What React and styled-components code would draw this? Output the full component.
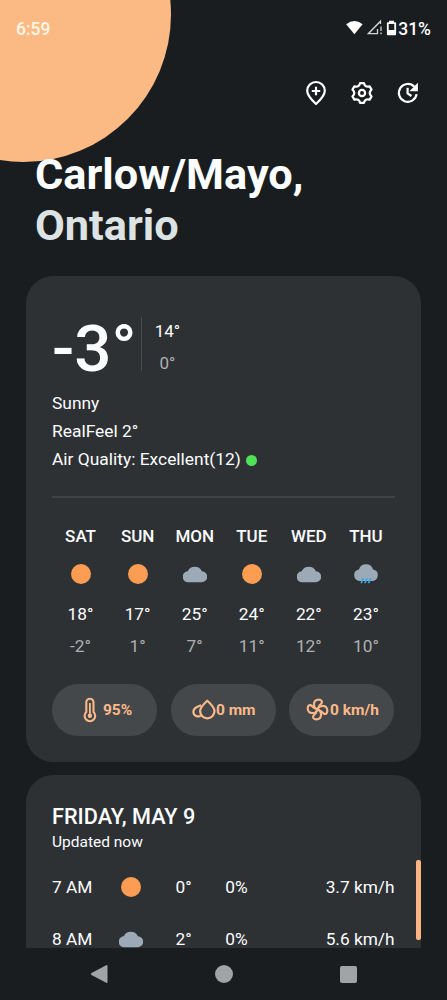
import styled, { createGlobalStyle } from "styled-components";

const GlobalStyle = createGlobalStyle`
  * {
    box-sizing: border-box;
  }
  body {
    margin: 0;
    background: #191d1f;
    font-family: Roboto, sans-serif;
    color: #fcfdff;
  }
  svg {
    display: block;
    flex-shrink: 0;
  }
`;

const Screen = styled.div`
  position: relative;
  display: flex;
  flex-direction: column;
  height: 1000px;
  overflow: hidden;
`;

const SunDisc = styled.div`
  position: absolute;
  top: -133px;
  left: -124.5px;
  width: 295px;
  height: 295px;
  border-radius: 50%;
  background: #fbba84;
`;

const StatusBar = styled.div`
  position: relative;
  display: flex;
  align-items: center;
  justify-content: space-between;
  height: 57px;
  padding: 0 16px;
  font-size: 17.5px;
  font-weight: 500;
`;

const Clock = styled.span`
  color: #fff6e6;
`;

const StatusIcons = styled.div`
  display: flex;
  align-items: center;
`;

const Toolbar = styled.div`
  display: flex;
  align-items: center;
  justify-content: flex-end;
  gap: 18px;
  height: 72px;
  padding-right: 25px;
`;

const Title = styled.h1`
  position: relative;
  margin: 20px 0 24.5px;
  padding-left: 35px;
  font-size: 43.3px;
  line-height: 51px;
  font-weight: 700;
  span {
    display: block;
    color: #dde2e3;
  }
`;

const Content = styled.div`
  flex: 1;
  min-height: 0;
  overflow: hidden;
`;

const Card = styled.section`
  margin: 0 26.5px 13px 26px;
  padding: ${(props) => props.$top}px 26px 26px;
  border-radius: 27px;
  background: #2e3134;
`;

const Current = styled.div`
  display: flex;
  height: 74px;
`;

const Temperature = styled.div`
  width: 89px;
  font-size: 65.5px;
  line-height: 67px;
  font-weight: 500;
  white-space: nowrap;
`;

const Separator = styled.div`
  width: 1px;
  height: 54px;
  margin-top: 2px;
  background: #494c4e;
`;

const Range = styled.div`
  width: 51px;
  font-size: 17px;
  line-height: 32px;
  text-align: center;
`;

const Low = styled.div`
  color: #adb0b2;
`;

const Details = styled.div`
  font-size: 17.4px;
  line-height: 28px;
  padding-bottom: 23px;
  border-bottom: 2px solid #404346;
`;

const QualityDot = styled.span`
  display: inline-block;
  width: 11px;
  height: 11px;
  margin-left: 5px;
  border-radius: 50%;
  background: #50e158;
  vertical-align: -1px;
`;

const Week = styled.div`
  display: grid;
  grid-template-columns: repeat(6, 1fr);
  margin-top: 28px;
`;

const Day = styled.div`
  display: flex;
  flex-direction: column;
  align-items: center;
  font-size: 17.3px;
  line-height: 32px;
`;

const DayName = styled.div`
  font-size: 17px;
  font-weight: 500;
  line-height: 20px;
`;

const DayIcon = styled.div`
  display: flex;
  align-items: center;
  height: 24px;
  margin: 16.5px 0 11.5px;
`;

const Chips = styled.div`
  display: grid;
  grid-template-columns: repeat(3, 1fr);
  gap: 13.5px;
  margin-top: 22px;
`;

const Chip = styled.div`
  display: flex;
  align-items: center;
  justify-content: center;
  height: 52px;
  border-radius: 26px;
  background: #45484a;
  color: #fbb98a;
  font-size: 15.5px;
  font-weight: 700;
  white-space: nowrap;
`;

const Heading = styled.h2`
  margin: 0;
  font-size: 21.7px;
  line-height: 26px;
  font-weight: 500;
`;

const Updated = styled.div`
  font-size: 15.5px;
  line-height: 24px;
  margin-bottom: 7px;
`;

const HourRow = styled.div`
  display: grid;
  grid-template-columns: 52px 53px 53px 53px 1fr;
  align-items: center;
  justify-items: center;
  height: 52px;
  font-size: 17.3px;
  white-space: nowrap;
`;

const Time = styled.span`
  justify-self: start;
`;

const Wind = styled.span`
  justify-self: end;
`;

const ScrollThumb = styled.div`
  position: absolute;
  left: 416px;
  top: 860px;
  width: 5px;
  height: 80px;
  border-radius: 2px;
  background: #fbb585;
`;

const NavBar = styled.nav`
  display: flex;
  align-items: center;
  justify-content: space-between;
  height: 52px;
  padding: 0 90px;
  background: #191d1f;
`;

const week = [
  { name: "SAT", icon: "sun", high: 18, low: -2 },
  { name: "SUN", icon: "sun", high: 17, low: 1 },
  { name: "MON", icon: "cloud", high: 25, low: 7 },
  { name: "TUE", icon: "sun", high: 24, low: 11 },
  { name: "WED", icon: "cloud", high: 22, low: 12 },
  { name: "THU", icon: "rain", high: 23, low: 10 },
];

const hours = [
  { time: "7 AM", icon: "sun", temp: 0, rain: 0, wind: 3.7 },
  { time: "8 AM", icon: "cloud", temp: 2, rain: 0, wind: 5.6 },
];

function WeatherIcon({ type }) {
  if (type === "sun") {
    return (
      <svg width="24" height="24" viewBox="0 0 24 24">
        <circle cx="12" cy="12" r="10" fill="#fd9d53" />
      </svg>
    );
  }
  return (
    <svg width="24" height="24" viewBox="0 0 24 24">
      <path
        d={
          type === "rain"
            ? "M5.6 18.9A5.7 5.7 0 0 1 4.9 7.6A7.4 7.4 0 0 1 19.1 7.6A5.7 5.7 0 0 1 18.4 18.9z"
            : "M5.6 20.3A5.5 5.5 0 0 1 4.7 9.3A7.9 7.9 0 0 1 18.9 9.3A5.5 5.5 0 0 1 18.4 20.3z"
        }
        fill="#9caab8"
      />
      {type === "rain" && (
        <path
          d="M9.2 16.7L7.5 20.5M12.9 16.7L11.2 20.5M16.6 16.7L14.9 20.5"
          stroke="#37a6e6"
          strokeWidth="1.8"
          strokeLinecap="round"
        />
      )}
    </svg>
  );
}

function SystemIcons() {
  return (
    <svg width="52" height="20" viewBox="0 0 52 20" fill="none">
      <path d="M0.2 5.3Q8.4-1.5 16.6 5.3L8.4 15.2z" fill="#fff" />
      <path d="M34.5 5V2.2L22.3 14.7H31.5V10M35 7.5V12M35 13.5V15.3" stroke="#d3d6d7" strokeWidth="1.3" />
      <path
        d="M43 1.8h5v1.4h1.2q.9 0 .9.9v11.1q0 1-.9 1h-7.4q-.9 0-.9-1V4.1q0-.9.9-.9H43zM42.7 5v6h5.6V5z"
        fill="#fff"
        fillRule="evenodd"
      />
    </svg>
  );
}

function AddPlaceIcon() {
  return (
    <svg width="28" height="28" viewBox="0 0 28 28" fill="none" stroke="#fff" strokeWidth="2.2">
      <path d="M14 25C8.5 20 5.2 16 5.2 11.8a8.8 8.8 0 0 1 17.6 0C22.8 16 19.5 20 14 25z" strokeLinejoin="round" />
      <path d="M14 7.8v8.4M9.8 12h8.4" />
    </svg>
  );
}

function SettingsIcon() {
  return (
    <svg width="28" height="28" viewBox="0 0 28 28" fill="none" stroke="#fff" strokeWidth="2.3" strokeLinejoin="round">
      <path d="M12.1 4.1h3.8q.8 2.5 2 3.1t3.7.1l1.9 3.2q-1.8 2-1.8 3.5t1.8 3.5l-1.9 3.2q-2.5-.5-3.7.1t-2 3.1h-3.8q-.8-2.5-2-3.1t-3.7-.1l-1.9-3.2q1.8-2 1.8-3.5t-1.8-3.5l1.9-3.2q2.5.5 3.7-.1t2-3.1z" />
      <circle cx="14" cy="14" r="3.1" />
    </svg>
  );
}

function UpdateIcon() {
  return (
    <svg width="28" height="28" viewBox="0 0 28 28" fill="none" stroke="#fff" strokeWidth="2.2">
      <path d="M20.3 7.8A8.9 8.9 0 1 0 22.6 15.2" />
      <path d="M13.6 8.7v5.6l3.9 2.7" />
      <path d="M23.9 3.8v8.5h-8.5z" fill="#fff" stroke="none" />
    </svg>
  );
}

function ThermometerIcon() {
  return (
    <svg width="26" height="26" viewBox="0 0 26 26" fill="none" stroke="currentColor" strokeWidth="2.1">
      <path d="M9.3 15V5.4a3.6 3.6 0 0 1 7.2 0V15a5.3 5.3 0 1 1-7.2 0z" />
      <path d="M12.9 6V18" strokeWidth="1.8" />
      <circle cx="12.9" cy="18.8" r="2.2" fill="currentColor" stroke="none" />
    </svg>
  );
}

function DropsIcon() {
  return (
    <svg width="25" height="26" viewBox="0 0 25 26" fill="none" stroke="currentColor" strokeWidth="2.2" strokeLinejoin="round">
      <path d="M16.3 3.7C12.8 6.8 9.1 10.3 9.1 14.1a7.2 7.2 0 0 0 14.4 0C23.5 10.3 19.8 6.8 16.3 3.7z" />
      <path d="M10.1 8.4C6 9.6 2.4 11.6 2.4 14.6a4.6 4.6 0 0 0 7.7 3.6" />
    </svg>
  );
}

function FanIcon() {
  const blade = "M13 13C10.3 12 8.9 9.3 9.5 6C10.1 3 13.8 2.2 16.3 3.2C18.3 4.2 17.8 6.6 16.2 7.6C14.3 8.8 14.5 10.5 13 13z";
  return (
    <svg width="25" height="25" viewBox="0 0 26 26" fill="none" stroke="currentColor" strokeWidth="2.2" strokeLinejoin="round">
      {[0, 90, 180, 270].map((angle) => (
        <path key={angle} d={blade} transform={`rotate(${angle} 13 13)`} />
      ))}
    </svg>
  );
}

function App() {
  return (
    <Screen>
      <GlobalStyle />
      <SunDisc />
      <StatusBar>
        <Clock>6:59</Clock>
        <StatusIcons>
          <SystemIcons />
          <span>31%</span>
        </StatusIcons>
      </StatusBar>
      <Toolbar>
        <AddPlaceIcon />
        <SettingsIcon />
        <UpdateIcon />
      </Toolbar>
      <Title>
        Carlow/Mayo,
        <span>Ontario</span>
      </Title>
      <Content>
        <Card $top={39}>
          <Current>
            <Temperature>-3°</Temperature>
            <Separator />
            <Range>
              <div>14°</div>
              <Low>0°</Low>
            </Range>
          </Current>
          <Details>
            <div>Sunny</div>
            <div>RealFeel 2°</div>
            <div>
              Air Quality: Excellent(12)
              <QualityDot />
            </div>
          </Details>
          <Week>
            {week.map((day) => (
              <Day key={day.name}>
                <DayName>{day.name}</DayName>
                <DayIcon>
                  <WeatherIcon type={day.icon} />
                </DayIcon>
                <div>{day.high}°</div>
                <Low>{day.low}°</Low>
              </Day>
            ))}
          </Week>
          <Chips>
            <Chip>
              <ThermometerIcon />
              95%
            </Chip>
            <Chip>
              <DropsIcon />0 mm
            </Chip>
            <Chip>
              <FanIcon />0 km/h
            </Chip>
          </Chips>
        </Card>
        <Card $top={29}>
          <Heading>FRIDAY, MAY 9</Heading>
          <Updated>Updated now</Updated>
          {hours.map((hour) => (
            <HourRow key={hour.time}>
              <Time>{hour.time}</Time>
              <WeatherIcon type={hour.icon} />
              <span>{hour.temp}°</span>
              <span>{hour.rain}%</span>
              <Wind>{hour.wind} km/h</Wind>
            </HourRow>
          ))}
        </Card>
      </Content>
      <ScrollThumb />
      <NavBar>
        <svg width="18" height="20" viewBox="0 0 18 20" fill="#a1a4a6">
          <path d="M16.2 1.2Q17.5.6 17.5 2V18Q17.5 19.4 16.2 18.8L1.5 10.9Q0 10 1.5 9.1z" />
        </svg>
        <svg width="18" height="18" viewBox="0 0 18 18" fill="#a1a4a6">
          <circle cx="9" cy="9" r="9" />
        </svg>
        <svg width="17" height="17" viewBox="0 0 17 17" fill="#a1a4a6">
          <rect width="17" height="17" rx="2" />
        </svg>
      </NavBar>
    </Screen>
  );
}

export default App;
